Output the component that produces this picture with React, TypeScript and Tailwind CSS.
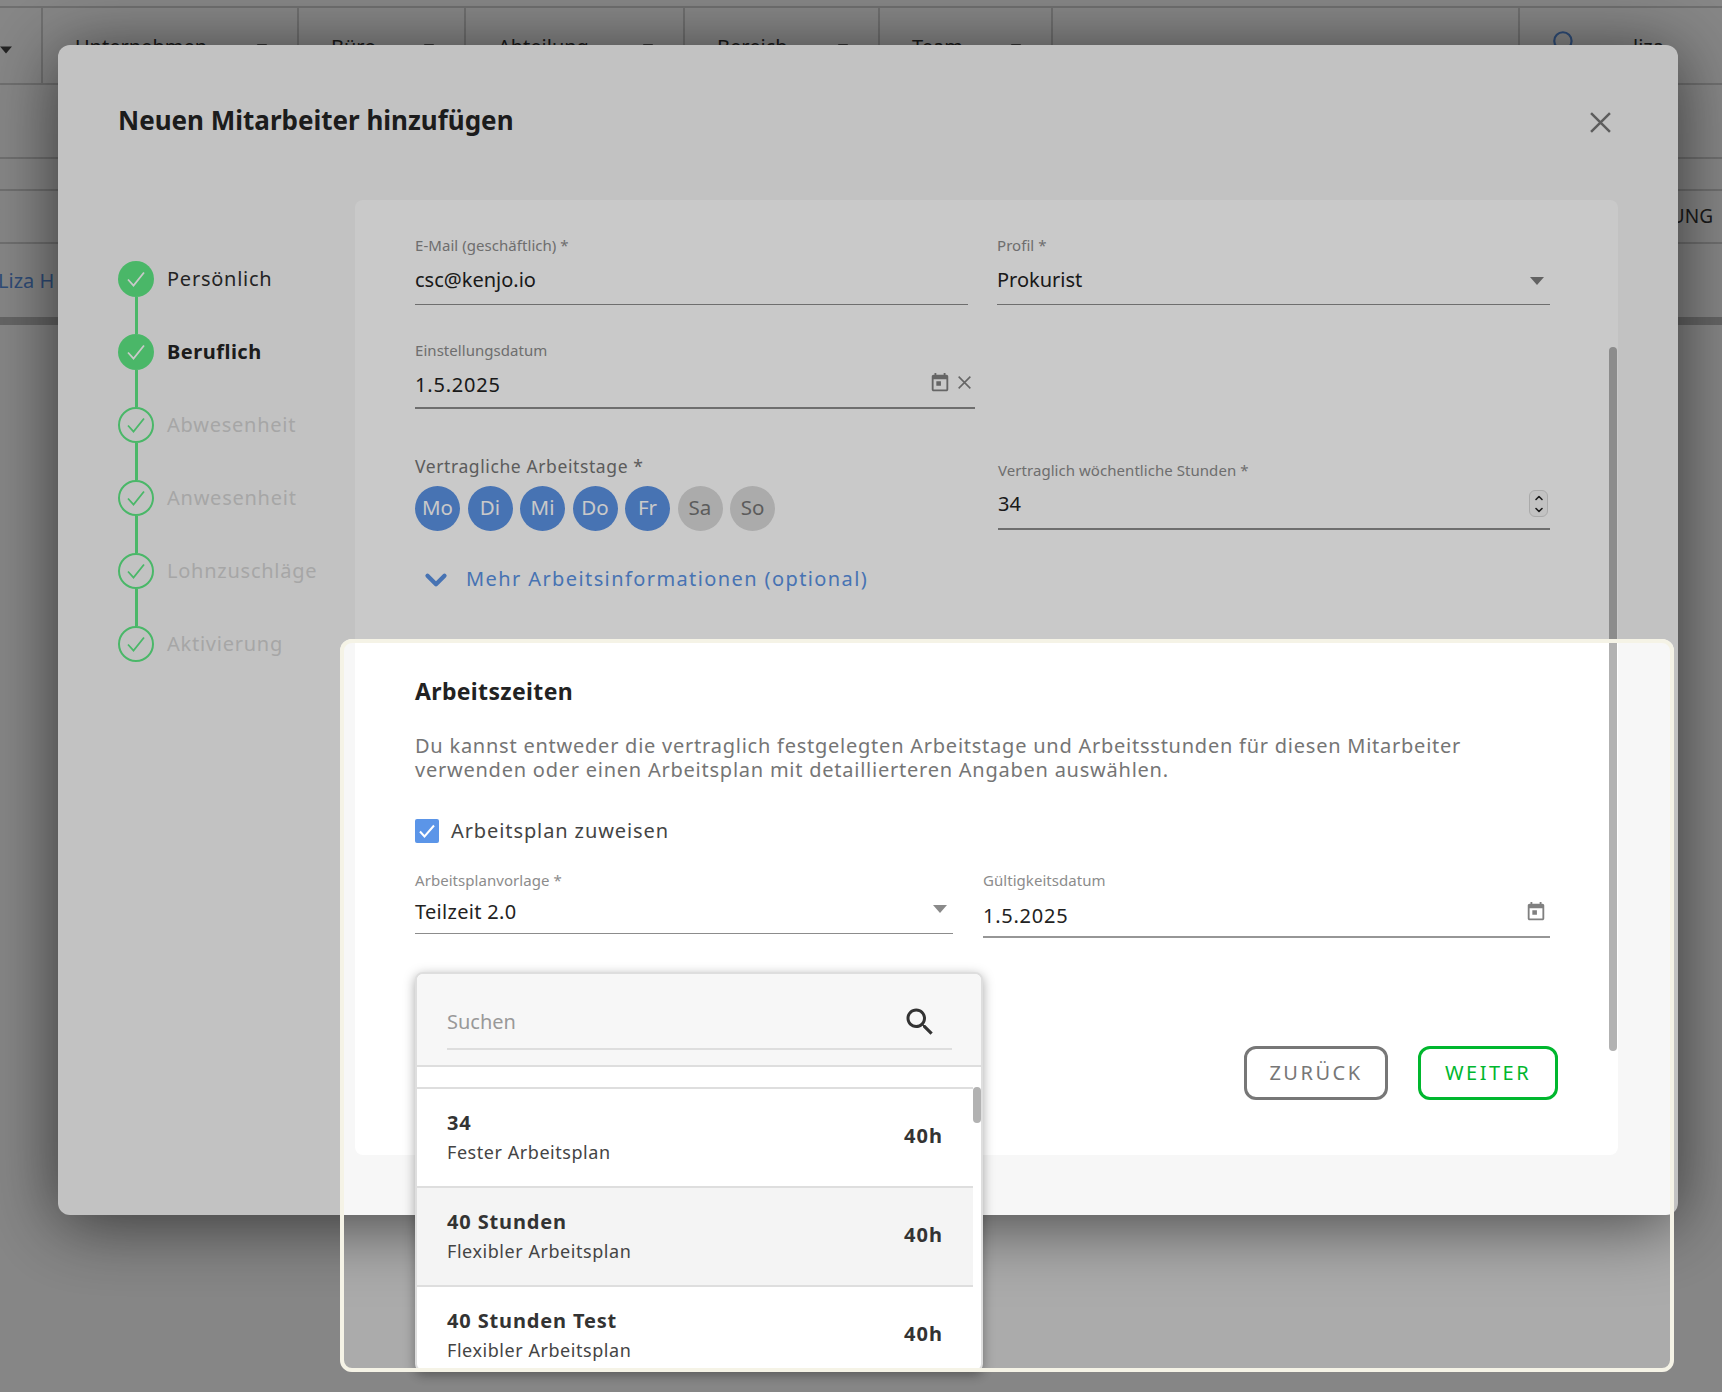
import { ReactNode } from "react";
import { ChevronDown, ChevronUp, Search } from "lucide-react";

const font = "font-['Noto_Sans',sans-serif]";

const Triangle = ({ className }: { className: string }) => (
  <svg viewBox="0 0 14 8" className={className} fill="currentColor">
    <path d="M0 0h14L7 8z" />
  </svg>
);

const CalendarIcon = ({ className }: { className: string }) => (
  <svg viewBox="0 0 24 24" className={className} fill="currentColor">
    <path d="M19 3h-1V1h-2v2H8V1H6v2H5c-1.1 0-2 .9-2 2v14c0 1.1.9 2 2 2h14c1.1 0 2-.9 2-2V5c0-1.1-.9-2-2-2zm0 16H5V8h14v11zM8 10h5v5H8z" />
  </svg>
);

const CloseIcon = ({ className }: { className: string }) => (
  <svg viewBox="0 0 20 20" className={className} fill="none" stroke="currentColor" strokeWidth="2.4">
    <path d="M1 1l18 18M19 1L1 19" />
  </svg>
);

const Field = ({
  label,
  value,
  className,
  boxClass,
  children,
}: {
  label: string;
  value: string;
  className: string;
  boxClass: string;
  children?: ReactNode;
}) => (
  <div className={className}>
    <div className="h-5 text-[15px] leading-5 tracking-[0.05px] text-[#8c8c8c]">{label}</div>
    <div className={`relative flex items-center text-[20px] text-[#222] ${boxClass}`}>
      {value}
      {children}
    </div>
  </div>
);

const steps = [
  { name: "Persönlich", state: "done" },
  { name: "Beruflich", state: "current" },
  { name: "Abwesenheit", state: "todo" },
  { name: "Anwesenheit", state: "todo" },
  { name: "Lohnzuschläge", state: "todo" },
  { name: "Aktivierung", state: "todo" },
];

const Stepper = () => (
  <div className="flex w-[297px] flex-col pl-[60px] pt-[61px]">
    {steps.map((step, index) => {
      const filled = step.state !== "todo";
      return (
        <div key={step.name}>
          <div className="flex h-9 items-center gap-[13px] tracking-[0.75px]">
            <div
              className={
                filled
                  ? "flex size-9 items-center justify-center rounded-full bg-[#5ee985] text-white"
                  : "flex size-9 items-center justify-center rounded-full border-2 border-[#5ee985] text-[#5ee985]"
              }
            >
              <svg viewBox="0 0 20 20" className="size-5" fill="none" stroke="currentColor" strokeWidth="1.8">
                <path d="M2 10.5l5.5 6L18 3.5" />
              </svg>
            </div>
            <span
              className={
                step.state === "done"
                  ? "text-[20px] text-[#2e2e2e]"
                  : step.state === "current"
                    ? "text-[20px] font-bold tracking-[0.5px] text-[#242424]"
                    : "text-[20px] text-[#d3d3d3]"
              }
            >
              {step.name}
            </span>
          </div>
          {index < steps.length - 1 && <div className="ml-[16.5px] h-[37px] w-[3px] bg-[#5ee985]" />}
        </div>
      );
    })}
  </div>
);

const days = [
  { name: "Mo", on: true },
  { name: "Di", on: true },
  { name: "Mi", on: true },
  { name: "Do", on: true },
  { name: "Fr", on: true },
  { name: "Sa", on: false },
  { name: "So", on: false },
];

const Panel = () => (
  <div className="relative h-[955px] w-[1263px] rounded-lg bg-white pl-[60px] pr-[68px] pt-[35px]">
    {/* scrollbar */}
    <div className="absolute right-px top-[147px] h-[704px] w-2 rounded bg-[#b2b2b2]" />

    <div className="flex gap-[29px]">
      <Field
        label="E-Mail (geschäftlich) *"
        value="csc@kenjo.io"
        className="w-[553px]"
        boxClass="h-[50px] border-b-[1.5px] border-[#8c8c8c]"
      />
      <Field
        label="Profil *"
        value="Prokurist"
        className="w-[553px]"
        boxClass="h-[50px] border-b-[1.5px] border-[#8c8c8c]"
      >
        <Triangle className="absolute right-[6px] top-[22px] h-2 w-[14px] text-[#7d7d7d]" />
      </Field>
    </div>

    <Field
      label="Einstellungsdatum"
      value="1.5.2025"
      className="mt-[35px] w-[560px]"
      boxClass="h-[49px] border-b-2 border-[#8c8c8c] pt-[3px] tracking-[0.8px]"
    >
      <CalendarIcon className="absolute right-[24px] top-[12px] size-[22px] text-[#808080]" />
      <CloseIcon className="absolute right-[4px] top-[16px] size-[13px] text-[#808080]" />
    </Field>

    <div className="mt-[45px] flex gap-[23px]">
      <div className="w-[560px]">
        <div className="h-6 text-[17.5px] leading-6 tracking-[0.6px] text-[#757575]">Vertragliche Arbeitstage *</div>
        <div className="mt-2 flex gap-[7.5px]">
          {days.map((day) => (
            <div
              key={day.name}
              className={
                day.on
                  ? "flex h-[45px] w-[45px] items-center justify-center rounded-full bg-[#5a92e4] pb-[2px] text-[20.5px] text-white"
                  : "flex h-[45px] w-[45px] items-center justify-center rounded-full bg-[#d9d9d9] pb-[2px] text-[20.5px] text-[#757575]"
              }
            >
              {day.name}
            </div>
          ))}
        </div>
      </div>
      <Field
        label="Vertraglich wöchentliche Stunden *"
        value="34"
        className="w-[552px] pt-[6px]"
        boxClass="h-[50px] border-b-2 border-[#8c8c8c] pb-px"
      >
        <div className="absolute right-[2px] top-[10px] flex h-[27px] w-[19px] flex-col items-center justify-center rounded-md border border-[#d8d8d8] bg-[#f6f6f6] text-[#222]">
          <ChevronUp size={12} strokeWidth={3.2} />
          <ChevronDown size={12} strokeWidth={3.2} />
        </div>
      </Field>
    </div>

    <div className="mt-[34px] flex h-7 items-center text-[20px] tracking-[1.4px] text-[#5a92e4]">
      <ChevronDown size={34} strokeWidth={3} className="ml-[3px] mr-[12px] mt-[2px] w-[36px]" />
      Mehr Arbeitsinformationen (optional)
    </div>

    <div className="mt-[83px] h-[30px] text-[23px] font-bold leading-[30px] tracking-[0.35px] text-[#222]">Arbeitszeiten</div>
    <p className="mt-7 text-[20px] leading-6 tracking-[0.76px] text-[#757575]">
      Du kannst entweder die vertraglich festgelegten Arbeitstage und Arbeitsstunden für diesen Mitarbeiter
      <br />
      verwenden oder einen Arbeitsplan mit detaillierteren Angaben auswählen.
    </p>

    <div className="mt-[37px] flex h-6 items-center gap-3 text-[20px] tracking-[0.9px] text-[#444]">
      <div className="flex size-6 items-center justify-center rounded-[2px] bg-[#5b95e8] text-white">
        <svg viewBox="0 0 20 20" className="size-5" fill="none" stroke="currentColor" strokeWidth="2">
          <path d="M3 10.5l4.5 5L17 4.5" />
        </svg>
      </div>
      Arbeitsplan zuweisen
    </div>

    <div className="mt-[27px] flex gap-[30px]">
      <Field
        label="Arbeitsplanvorlage *"
        value="Teilzeit 2.0"
        className="w-[538px]"
        boxClass="h-11 border-b border-[#8c8c8c] tracking-[0.3px]"
      >
        <Triangle className="absolute right-[6px] top-[15px] h-2 w-[14px] text-[#8a8a8a]" />
      </Field>
      <Field
        label="Gültigkeitsdatum"
        value="1.5.2025"
        className="w-[567px]"
        boxClass="h-12 border-b-2 border-[#969696] pt-[6px] tracking-[0.75px]"
      >
        <CalendarIcon className="absolute right-[3px] top-[11px] size-[22px] text-[#808080]" />
      </Field>
    </div>

    <div className="-mr-2 mt-[108px] flex justify-end gap-[30px] text-[20px] tracking-[2.5px]">
      <div className="flex h-[54px] w-[144px] items-center justify-center rounded-xl border-[3px] border-[#777] text-[#777]">
        ZURÜCK
      </div>
      <div className="flex h-[54px] w-[140px] items-center justify-center rounded-xl border-[3px] border-[#00b72e] text-[#00b72e]">
        WEITER
      </div>
    </div>
  </div>
);

const schedules = [
  { name: "34", type: "Fester Arbeitsplan" },
  { name: "40 Stunden", type: "Flexibler Arbeitsplan", hover: true },
  { name: "40 Stunden Test", type: "Flexibler Arbeitsplan" },
];

const Dropdown = () => (
  <div className="absolute left-[415px] top-[972px] h-[400px] w-[568px] overflow-hidden rounded-lg border-2 border-[#dedede] bg-white shadow-[0_3px_12px_rgba(0,0,0,0.35)]">
    <div className="h-[93px] border-b-2 border-[#dedede] bg-[#f7f7f7] pl-[30px] pr-[29px] pt-[24px]">
      <div className="flex h-[52px] items-center justify-between border-b-2 border-[#dedede] pb-[2px] pr-[14px]">
        <span className="text-[20px] text-[#999]">Suchen</span>
        <svg viewBox="0 0 24 24" className="size-9 text-[#333]" fill="currentColor">
          <path d="M15.5 14h-.79l-.28-.27C15.41 12.59 16 11.11 16 9.5 16 5.91 13.09 3 9.5 3S3 5.91 3 9.5 5.91 16 9.5 16c1.61 0 3.09-.59 4.23-1.57l.27.28v.79l5 4.99L20.49 19l-4.99-5zm-6 0C7.01 14 5 11.99 5 9.5S7.01 5 9.5 5 14 7.01 14 9.5 11.99 14 9.5 14z" />
        </svg>
      </div>
    </div>
    <div className="relative mt-5">
      <div className="absolute right-0 top-0 h-9 w-2 rounded bg-[#b2b2b2]" />
      {schedules.map((item) => (
        <div
          key={item.name}
          className={
            item.hover
              ? "mr-2 flex h-[99px] items-center justify-between border-t-2 border-[#dedede] bg-[#f4f4f4] pb-[3px] pl-[30px] pr-[30px]"
              : "mr-2 flex h-[99px] items-center justify-between border-t-2 border-[#dedede] pb-[3px] pl-[30px] pr-[30px]"
          }
        >
          <div>
            <div className="text-[20px] font-bold leading-7 tracking-[0.85px] text-[#333]">{item.name}</div>
            <div className="mt-[3px] text-[18px] leading-6 tracking-[0.55px] text-[#444]">{item.type}</div>
          </div>
          <div className="text-[20px] font-bold tracking-[1px] text-[#333]">40h</div>
        </div>
      ))}
    </div>
  </div>
);

const headerCells = [
  { name: "Unternehmen", width: "w-[256px]" },
  { name: "Büro", width: "w-[167px]" },
  { name: "Abteilung", width: "w-[219px]" },
  { name: "Bereich", width: "w-[195px]" },
  { name: "Team", width: "w-[173px]" },
];

const PageBehind = () => (
  <div className="pt-[6px]">
    <div className="flex h-[79px] border-y-2 border-[#d4d4d4]">
      <div className="relative w-[43px] border-r-2 border-[#d4d4d4]">
        <Triangle className="absolute left-0 top-[38px] h-[8px] w-[12px] text-[#444]" />
      </div>
      {headerCells.map((cell) => (
        <div
          key={cell.name}
          className={`flex items-start justify-between border-r-2 border-[#d4d4d4] pl-[32px] pr-[28px] pt-[24px] text-[20px] text-[#333] ${cell.width}`}
        >
          {cell.name}
          <Triangle className="mt-[12px] h-[6px] w-[14px] text-[#666]" />
        </div>
      ))}
      <div className="w-[467px] border-r-2 border-[#d4d4d4]" />
      <div className="flex items-start pl-[31px] pt-[21px] text-[20px] text-[#333]">
        <Search size={26} className="text-[#5a92e4]" />
        <span className="ml-[56px] mt-[3px]">liza</span>
      </div>
    </div>
    <div className="h-[74px] border-b-2 border-[#d4d4d4]" />
    <div className="h-[32px] border-b-2 border-[#d4d4d4]" />
    <div className="flex h-[53px] items-center justify-between border-b-2 border-[#d4d4d4] text-[19px] text-[#333]">
      <span className="-ml-[10px]">E</span>
      <span className="pr-[9px]">UNG</span>
    </div>
    <div className="flex h-[73px] items-center text-[20px] text-[#5a92e4]">
      <span className="-ml-[2px]">Liza H</span>
    </div>
    <div className="h-[8px] bg-[#c0c0c0]" />
  </div>
);

const App = () => {
  return (
    <div className={`relative h-[1392px] w-[1722px] overflow-hidden bg-white ${font}`}>
      <PageBehind />
      <div className="absolute inset-0 bg-black/33" />

      {/* modal */}
      <div className="absolute left-[58px] top-[45px] flex h-[1170px] w-[1620px] flex-col rounded-xl bg-[#f7f7f7] shadow-[0_8px_70px_rgba(0,0,0,0.6)]">
        <div className="relative h-[155px] shrink-0 pl-[60px] pt-[57px]">
          <h1 className="text-[26px] font-bold leading-9 text-[#242424]">Neuen Mitarbeiter hinzufügen</h1>
          <CloseIcon className="absolute right-[67px] top-[67px] size-[21px] text-[#777]" />
        </div>
        <div className="flex">
          <Stepper />
          <Panel />
        </div>
      </div>

      <Dropdown />

      {/* tour spotlight */}
      <div className="absolute left-[340px] top-[639px] h-[733px] w-[1334px] rounded-xl border-4 border-[#f5f3e6] shadow-[0_0_0_2000px_rgba(0,0,0,0.21)]" />
    </div>
  );
};

export default App;
